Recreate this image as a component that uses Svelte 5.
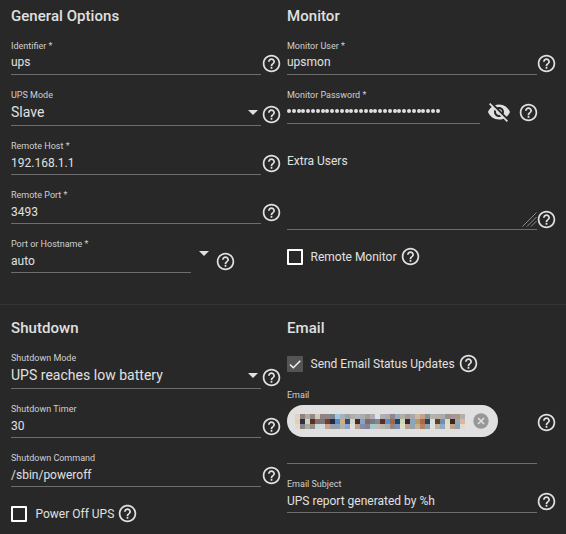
<script>
  const mosaic = [
    'e0d3c2 92827d adaba0 938788 cfc9bf 8f8184 96827f 788692 a0c5e2 aab2b8 92a7a9 b1adad afb5ba a6aeb0 a99d91 acacba dfe0e2 b1adb2 a6acb0 908689 92acbf aeb2a5 a69b9a aba6a9 c8bba4 c5a08a 879391 b3b2b3 b6af9e a7adb1 9b918e a69796 ae9683 b2afae',
    'e2cfad 2d304d c9d6c1 622e1b 82706d 7d7775 7b3c20 20294a 4d8ccb d0ae79 394778 d3d9c5 4b2822 7ea5ca 876857 727d80 748d99 5e2d20 568fc4 9b6d45 1e4075 d0d6b2 3c2424 86a8c0 b69869 ae6a3e 29435d d8dfdc 693b22 748eae dbddb3 3b2223 88abc4 dfb798',
    'e0d9ce 8c827f aaafa4 978b8e d0d7d9 d2dadd c5a38e 9b9da5 929faf aeb0b1 91a5cb dededb b7a08e 858ca2 88809a a7c6c9 c7b8b1 b6b4ab a8aeaf 938684 7c94b8 d8dec8 bb9e8c 94a3ae c7ae90 b58261 869fb3 dfe0dc bab49e 91a9c6 dedfc4 bda08b 92a1ad dedbd2'
  ].map((row) => row.split(' '));

  const general = [
    { label: 'Identifier *', value: 'ups', h: 43, kind: 'first' },
    { label: 'UPS Mode', value: 'Slave', h: 51, kind: 'select' },
    { label: 'Remote Host *', value: '192.168.1.1', h: 49 },
    { label: 'Remote Port *', value: '3493', h: 49 },
    { label: 'Port or Hostname *', value: 'auto', h: 49, kind: 'combo' }
  ];
  const shutdown = [
    { label: 'Shutdown Mode', value: 'UPS reaches low battery', h: 45, kind: 'select' },
    { label: 'Shutdown Timer', value: '30', h: 49 },
    { label: 'Shutdown Command', value: '/sbin/poweroff', h: 49 }
  ];
</script>

{#snippet help()}
  <svg class="help" viewBox="0 0 24 24" aria-hidden="true"><path d="M11 18h2v-2h-2v2zm1-16C6.480 2 2 6.480 2 12s4.480 10 10 10 10-4.480 10-10S17.520 2 12 2zm0 18c-4.410 0-8-3.590-8-8s3.590-8 8-8 8 3.590 8 8-3.590 8-8 8zm0-14c-2.210 0-4 1.790-4 4h2c0-1.100.900-2 2-2s2 .900 2 2c0 2-3 1.750-3 5h2c0-2.250 3-2.500 3-5 0-2.210-1.790-4-4-4z" /></svg>
{/snippet}

{#snippet arrow()}
  <svg class="arrow" viewBox="0 0 10 5" aria-hidden="true"><path d="M0 0h10L5 5z" /></svg>
{/snippet}

{#snippet field(f)}
  <div class="row {f.kind ?? 'text'}" style:height="{f.h}px">
    <div class="input">
      <span class="label">{f.label}</span>
      <span class="value"><span>{f.value}</span>{#if f.kind === 'select'}{@render arrow()}{/if}</span>
    </div>
    {#if f.kind === 'combo'}{@render arrow()}{/if}
    {@render help()}
  </div>
{/snippet}

<main>
  <section class="top">
    <div class="col">
      <h2>General Options</h2>
      {#each general as f}{@render field(f)}{/each}
    </div>
    <div class="col right">
      <h2>Monitor</h2>
      {@render field({ label: 'Monitor User *', value: 'upsmon', h: 43, kind: 'first' })}
      <div class="row password">
        <div class="input">
          <span class="label">Monitor Password *</span>
          <span class="dots">{#each Array(32) as _}<i></i>{/each}</span>
        </div>
        <svg class="eye" viewBox="0 0 24 24" aria-hidden="true"><path d="M12 7c2.760 0 5 2.240 5 5 0 .650-.130 1.260-.360 1.830l2.920 2.920c1.510-1.260 2.700-2.890 3.430-4.750-1.730-4.390-6-7.500-11-7.500-1.400 0-2.740.250-3.980.700l2.160 2.160C10.740 7.130 11.350 7 12 7zM2 4.270l2.280 2.280.460.460C3.080 8.300 1.780 10.020 1 12c1.730 4.390 6 7.500 11 7.500 1.550 0 3.030-.300 4.380-.840l.420.420L19.730 22 21 20.730 3.270 3 2 4.270zM7.530 9.800l1.550 1.550c-.050.210-.080.430-.080.650 0 1.660 1.340 3 3 3 .220 0 .440-.030.650-.080l1.550 1.550c-.670.330-1.410.530-2.200.530-2.760 0-5-2.240-5-5 0-.790.200-1.530.530-2.200zm4.310-.780l3.150 3.150.020-.160c0-1.660-1.340-3-3-3l-.170.010z" /></svg>
        {@render help()}
      </div>
      <div class="row area">
        <div class="input">
          <span class="placeholder">Extra Users</span>
          <svg class="grip" viewBox="0 0 15 15" aria-hidden="true"><path d="M.5 14.500L14.500.5M5 14.500L14.500 5M9 14.500L14.500 9" /></svg>
        </div>
        {@render help()}
      </div>
      <div class="check remote"><span class="box"></span><span>Remote Monitor</span>{@render help()}</div>
    </div>
  </section>

  <section class="bottom">
    <div class="col">
      <h2>Shutdown</h2>
      {#each shutdown as f}{@render field(f)}{/each}
      <div class="check power"><span class="box"></span><span>Power Off UPS</span>{@render help()}</div>
    </div>
    <div class="col right">
      <h2>Email</h2>
      <div class="check send">
        <span class="box checked"><svg viewBox="0 0 16 16" aria-hidden="true"><path d="M3 8.500l3.300 3.300L13.300 4.800" /></svg></span>
        <span>Send Email Status Updates</span>{@render help()}
      </div>
      <div class="row email">
        <div class="input">
          <span class="label">Email</span>
          <div class="chip">
            <div class="mosaic">
              {#each mosaic as row}{#each row as c}<i style:background="#{c}"></i>{/each}{/each}
            </div>
            <svg class="close" viewBox="0 0 16 16" aria-hidden="true"><circle cx="8" cy="8" r="7.700" /><path d="M5 5l6 6M11 5l-6 6" /></svg>
          </div>
        </div>
        {@render help()}
      </div>
      {@render field({ label: 'Email Subject', value: 'UPS report generated by %h', h: 49 })}
    </div>
  </section>
</main>

<style>
  :global(body) { background: #282828; }
  main {
    width: 566px;
    height: 534px;
    overflow: hidden;
    background: #282828;
    color: #e0e0e0;
    font-family: Roboto, "Liberation Sans", sans-serif;
    font-size: 12px;
  }
  section { display: flex; gap: 5px; padding-left: 11px; box-sizing: border-box; }
  .top { height: 304px; }
  .bottom { height: 230px; border-top: 1px solid #343434; }
  .col { width: 271px; flex: none; }
  h2 { margin: 0; height: 32px; padding-top: 6px; box-sizing: border-box; font-size: 15px; line-height: 20px; font-weight: 500; letter-spacing: 0.05px; }
  .bottom h2 { height: 39px; padding-top: 13px; }
  .row { display: flex; align-items: flex-end; }
  .input {
    width: 250px;
    height: 35px;
    box-sizing: border-box;
    border-bottom: 1px solid #6d6d6d;
    display: flex;
    flex-direction: column;
    flex: none;
  }
  .select .input { height: 37px; }
  .label { font-size: 9px; line-height: 12px; height: 12px; color: #d0d0d0; white-space: nowrap; }
  .value { display: flex; align-items: center; justify-content: space-between; line-height: 18px; height: 18px; margin-top: 2px; white-space: nowrap; }
  .first .value { margin-top: 1px; }
  .select .value { font-size: 14px; margin-top: 2px; padding-right: 3px; letter-spacing: 0.02px; }
  .help { width: 21px; height: 21px; fill: #e0e0e0; flex: none; display: block; }
  .row .help { margin-bottom: 1px; }
  .first .help, .select .help { margin-bottom: 1.5px; }
  .right .row .help { margin-left: -1px; }
  .arrow { width: 10px; height: 5px; fill: #e0e0e0; flex: none; }
  .combo .input { width: 180px; }
  .combo .arrow { margin: 0 6px 17px 8px; }
  .password { height: 49px; }
  .password .input { width: 193px; }
  .dots { display: flex; align-items: center; justify-content: space-between; width: 153px; height: 18px; margin-top: 1px; }
  .dots i { width: 4px; height: 4px; border-radius: 50%; background: #e0e0e0; flex: none; }
  .eye { width: 24px; height: 24px; fill: #e0e0e0; margin: 0 8px 0 7px; flex: none; }
  .right .password .help { margin-bottom: 1.5px; }
  .area { height: 106px; }
  .area .input { height: 78px; justify-content: space-between; }
  .area .help { margin-bottom: 0.5px; }
  .placeholder { line-height: 18px; }
  .grip { width: 15px; height: 15px; align-self: flex-end; fill: none; stroke: #8a8a8a; stroke-width: 1; margin-bottom: 2px; }
  .check { display: flex; align-items: center; height: 21px; white-space: nowrap; }
  .box { width: 16px; height: 16px; box-sizing: border-box; border: 2px solid #fff; border-radius: 1px; margin-right: 7.5px; flex: none; }
  .power .box { margin-right: 8.5px; }
  .box.checked { border: 0; background: #545454; }
  .box svg { display: block; width: 16px; height: 16px; fill: none; stroke: #f4f4f4; stroke-width: 1.500; }
  .check .help { margin-left: 3.5px; }
  .power .help { margin-left: 3px; }
  .remote { margin-top: 16px; }
  .power { margin-top: 16px; }
  .send { margin-top: 9px; }
  .email { height: 90px; }
  .email .input { height: 75px; }
  .email .help { margin-bottom: 31.5px; }
  .chip { width: 211px; height: 32px; margin-top: 4px; border-radius: 16px; background: #e0e0e0; display: flex; align-items: center; padding-left: 8px; box-sizing: border-box; }
  .mosaic { display: grid; grid-template-columns: repeat(34, 5px); grid-auto-rows: 5px; }
  .close { width: 16px; height: 16px; margin-left: 8px; fill: #979797; }
  .close path { stroke: #e0e0e0; stroke-width: 1.600; }
</style>
